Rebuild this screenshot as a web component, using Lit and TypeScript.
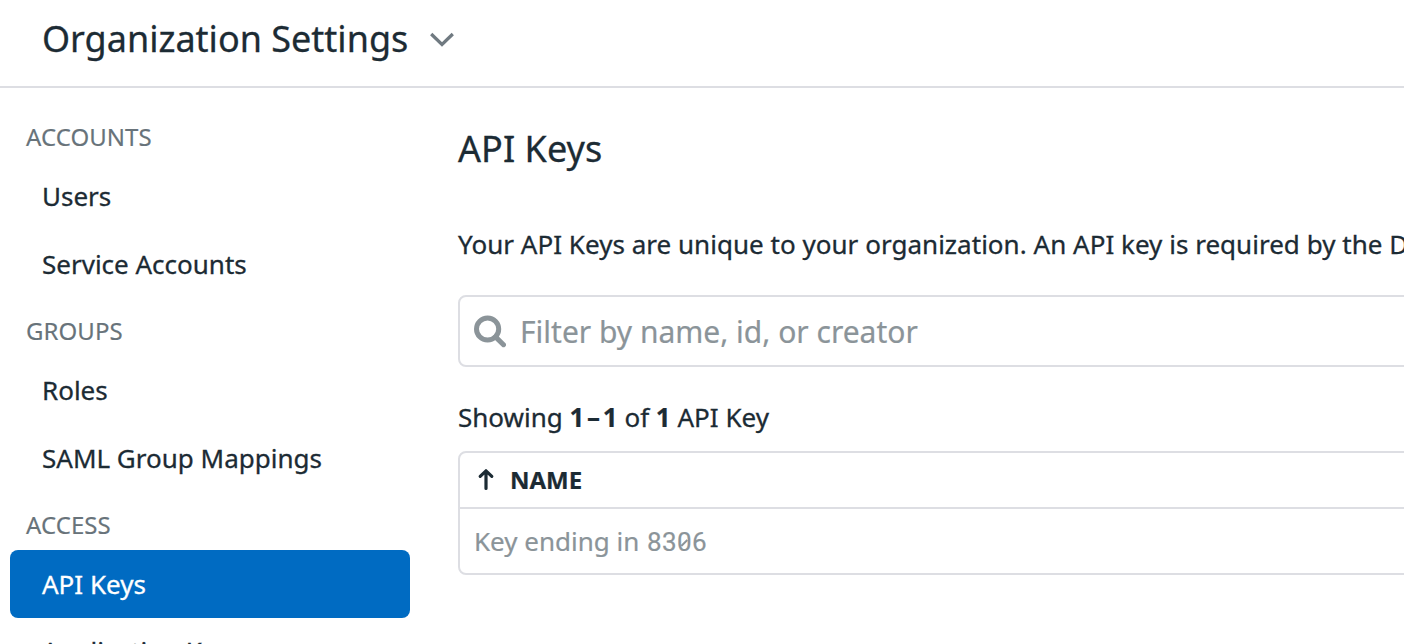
import { LitElement, html, css } from "lit";
import { customElement } from "lit/decorators.js";
import { classMap } from "lit/directives/class-map.js";

interface NavGroup {
  label: string;
  items: string[];
}

const NAV: NavGroup[] = [
  { label: "ACCOUNTS", items: ["Users", "Service Accounts"] },
  { label: "GROUPS", items: ["Roles", "SAML Group Mappings"] },
  { label: "ACCESS", items: ["API Keys", "Application Keys"] },
];

@customElement("settings-nav")
class SettingsNav extends LitElement {
  static styles = css`
    :host { display: block; width: 400px; flex: none; padding: 16px 0 0 10px; }
    .label { height: 50px; padding: 8px 0 0 16px; line-height: 50px; font-size: 24px; letter-spacing: 0.06px; color: #68737a; -webkit-text-stroke-width: 0.15px; }
    .item { height: 68px; line-height: 68px; padding-left: 32px; font-size: 26px; border-radius: 8px; color: #1c2b34; }
    .item:last-child { line-height: 66px; }
    .active { background: #006bc2; color: #fff; }
  `;
  render() {
    return html`<nav>
      ${NAV.map((g) => html`
        <div class="label">${g.label}</div>
        ${g.items.map((i) => html`<div class=${classMap({ item: true, active: i === "API Keys" })}>${i}</div>`)}
      `)}
    </nav>`;
  }
}

@customElement("api-keys-panel")
class ApiKeysPanel extends LitElement {
  static styles = css`
    :host { display: block; flex: 1; min-width: 0; padding: 36px 0 0 48px; overflow: hidden; color: #1c2b34; }
    .heading { margin: 0; font-size: 36px; font-weight: 400; line-height: 50px; letter-spacing: 0.05px; }
    .desc { margin: 50px 0 0; font-size: 26px; line-height: 40px; letter-spacing: 0.025px; }
    .search { display: flex; align-items: center; box-sizing: border-box; width: 1100px; height: 72px; margin-top: 31px; padding-left: 12px; border: 2px solid #dddee3; border-radius: 8px; font-size: 30px; color: #8b9499; -webkit-text-stroke-width: 0.2px; }
    .search svg { flex: none; margin-right: 14px; }
    .count { margin-top: 30px; line-height: 40px; font-size: 26px; }
    .dash { margin: 0 2.7px; }
    .table { box-sizing: border-box; width: 1100px; margin-top: 14px; border: 2px solid #dddee3; border-radius: 8px; }
    .head { display: flex; align-items: center; height: 54px; padding-left: 16px; border-bottom: 2px solid #dddee3; font-size: 24px; font-weight: 700; }
    .head svg { flex: none; margin-right: 14px; }
    .head span { padding-bottom: 2px; -webkit-text-stroke-width: 0.2px; }
    .row { height: 64px; line-height: 64px; padding-left: 14px; font-size: 26px; color: #8b9499; -webkit-text-stroke-width: 0.2px; }
    .mono { margin-left: 1px; font-family: Roboto, sans-serif; letter-spacing: 0.4px; }
    .zero { position: relative; display: inline-block; line-height: 1; }
    .zero svg { position: absolute; left: 0; top: 0; width: 100%; height: 100%; }
    b { -webkit-text-stroke-width: 0.2px; }
  `;
  render() {
    return html`
      <h1 class="heading">API Keys</h1>
      <p class="desc">Your API Keys are unique to your organization. An API key is required by the D</p>
      <div class="search">
        <svg width="34" height="34" viewBox="0 0 34 34" fill="none" stroke="currentColor" stroke-width="5">
          <circle cx="15.6" cy="15" r="11.1" />
          <path d="M23.5 22.9L31.5 30.7" stroke-linecap="round" />
        </svg>
        <span>Filter by name, id, or creator</span>
      </div>
      <div class="count">Showing <b>1<span class="dash">–</span>1</b> of <b>1</b> API Key</div>
      <div class="table">
        <div class="head">
          <svg width="20" height="24" viewBox="0 0 20 24" fill="none" stroke="currentColor" stroke-width="3.2" stroke-linecap="round" stroke-linejoin="round">
            <path d="M10 20.5V3M4.2 8.3L10 2.8L15.8 8.3" />
          </svg>
          <span>NAME</span>
        </div>
        <div class="row">Key ending in <span class="mono">83<span class="zero">0<svg viewBox="0 0 15 26" fill="none" stroke="currentColor" stroke-width="1.9"><path d="M4.3 17L10.3 11" /></svg></span>6</span></div>
      </div>
    `;
  }
}

@customElement("app-root")
class AppRoot extends LitElement {
  static styles = css`
    :host { display: block; height: 644px; overflow: hidden; background: #fff; font-family: "Noto Sans", sans-serif; white-space: nowrap; -webkit-text-stroke-width: 0.3px; }
    .top { display: flex; align-items: center; box-sizing: border-box; height: 88px; padding: 0 0 8px 42px; border-bottom: 2px solid #dddee3; color: #1c2b34; }
    .title { font-size: 36px; line-height: 50px; }
    .top svg { margin-left: 20px; color: #707a81; }
    .body { display: flex; }
  `;
  render() {
    return html`
      <header class="top">
        <span class="title">Organization Settings</span>
        <svg width="28" height="20" viewBox="0 0 28 20" fill="none" stroke="currentColor" stroke-width="3.2"><path d="M3.2 5l10.8 10.5L24.8 5" /></svg>
      </header>
      <div class="body">
        <settings-nav></settings-nav>
        <api-keys-panel></api-keys-panel>
      </div>
    `;
  }
}
